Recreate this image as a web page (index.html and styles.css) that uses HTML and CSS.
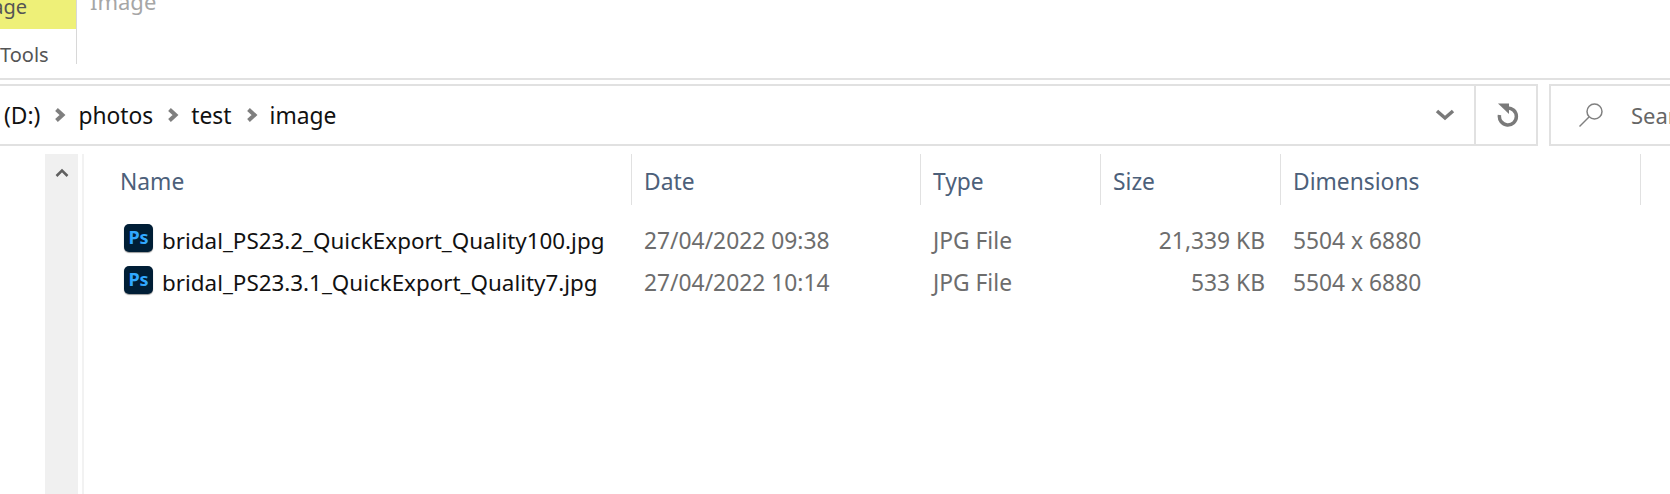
FILE: index.html
```html
<!DOCTYPE html>
<html lang="en">
<head>
  <meta charset="UTF-8">
  <title>image</title>
  <link rel="stylesheet" href="styles.css">
</head>
<body>

  <!-- Ribbon, only the bottom of it is visible -->
  <div class="ribbon">
    <div class="ribbon-tabs">
      <div class="tab-active">age</div>
      <div class="tab-tools">Tools</div>
    </div>
    <div class="ribbon-group">Image</div>
  </div>

  <!-- Address bar -->
  <div class="nav">
    <div class="address">
      <div class="crumbs">
        <span>(D:)</span>
        <svg class="crumb-sep" viewBox="0 0 12 14"><path d="M2.500 1.500l6 5.500-6 5.500" /></svg>
        <span>photos</span>
        <svg class="crumb-sep" viewBox="0 0 12 14"><path d="M2.500 1.500l6 5.500-6 5.500" /></svg>
        <span>test</span>
        <svg class="crumb-sep" viewBox="0 0 12 14"><path d="M2.500 1.500l6 5.500-6 5.500" /></svg>
        <span>image</span>
      </div>
      <div class="address-drop">
        <svg viewBox="0 0 20 12"><path d="M2 2l8 7 8-7" /></svg>
      </div>
      <div class="address-refresh">
        <svg viewBox="0 0 24 24">
          <path class="refresh-arc" d="M11 5a8.500 8.500 0 1 1-7.500 7" />
          <path class="refresh-head" d="M2 0.500h11v10.500z" />
        </svg>
      </div>
    </div>
    <div class="search">
      <svg viewBox="0 0 26 26"><circle cx="16.500" cy="9.500" r="7.500" /><path d="M11 15L1.500 24.500" /></svg>
      <span>Search</span>
    </div>
  </div>

  <div class="content">
    <div class="scroll">
      <svg viewBox="0 0 14 10"><path d="M1.500 8L7 2.500 12.500 8" /></svg>
    </div>

    <div class="files">
      <div class="head">
        <div class="col-name">Name</div>
        <div class="col-date">Date</div>
        <div class="col-type">Type</div>
        <div class="col-size">Size</div>
        <div class="col-dim">Dimensions</div>
      </div>

      <div class="row">
        <div class="col-name"><span class="ps">Ps</span><span class="fname">bridal_PS23.2_QuickExport_Quality100.jpg</span></div>
        <div class="col-date">27/04/2022 09:38</div>
        <div class="col-type">JPG File</div>
        <div class="col-size num">21,339 KB</div>
        <div class="col-dim">5504 x 6880</div>
      </div>
      <div class="row">
        <div class="col-name"><span class="ps">Ps</span><span class="fname">bridal_PS23.3.1_QuickExport_Quality7.jpg</span></div>
        <div class="col-date">27/04/2022 10:14</div>
        <div class="col-type">JPG File</div>
        <div class="col-size num">533 KB</div>
        <div class="col-dim">5504 x 6880</div>
      </div>
    </div>
  </div>

</body>
</html>
```

FILE: styles.css
```css
/* General */
html, body {
  height: 494px;
  overflow: hidden;
}

body {
  margin: 0;
  background-color: #fff;
  font-family: "Noto Sans", "Open Sans", sans-serif;
  font-size: 22.800px;
  color: #111;
}

/* Ribbon */
.ribbon {
  display: flex;
  height: 78px;
  border-bottom: 2px solid #e1e1e1;
  font-size: 22px;
}

.ribbon-tabs {
  width: 76px;
  height: 64px;
  border-right: 1px solid #d8d8d8;
  text-align: right;
  overflow: hidden;
}

/* the tab label runs off the left edge of the window */
.tab-active {
  display: flex;
  justify-content: flex-end;
  height: 29px;
  line-height: 14px;
  padding-right: 49px;
  background-color: #eef078;
  color: #555;
  font-size: 20px;
}

.tab-tools {
  margin-top: 10px;
  line-height: 32px;
  padding-right: 29px;
  color: #555;
  font-size: 20px;
}

.ribbon-group {
  margin-left: 13px;
  height: 20px;
  line-height: 3px;
  color: #a6a6a6;
}

/* Address bar */
.nav {
  display: flex;
  gap: 11px;
  margin-top: 4px;
  height: 62px;
}

.address {
  width: 1538px;
  display: flex;
  align-items: stretch;
  box-sizing: border-box;
  border: 2px solid #e1e1e1;
  border-left: none;
}

.crumbs {
  flex: 1;
  display: flex;
  align-items: center;
  padding-left: 4px;
  color: #111;
}

.crumb-sep {
  width: 12px;
  height: 14px;
  margin: 0 12px 0 14px;
}

.crumb-sep path {
  fill: none;
  stroke: #7f7f7f;
  stroke-width: 4;
}

.address-drop {
  width: 62px;
  padding-left: 4px;
  box-sizing: border-box;
  display: flex;
  align-items: center;
  justify-content: center;
}

.address-drop svg {
  width: 20px;
  height: 12px;
}

.address-drop path {
  fill: none;
  stroke: #7a7a7a;
  stroke-width: 3.500;
}

.address-refresh {
  width: 62px;
  padding-left: 4px;
  box-sizing: border-box;
  border-left: 2px solid #e1e1e1;
  display: flex;
  align-items: center;
  justify-content: center;
}

.address-refresh svg {
  width: 24px;
  height: 24px;
}

.refresh-arc {
  fill: none;
  stroke: #7a7a7a;
  stroke-width: 3.500;
}

.refresh-head {
  fill: #7a7a7a;
}

.search {
  flex: 1;
  display: flex;
  align-items: center;
  box-sizing: border-box;
  border: 2px solid #e1e1e1;
  border-right: none;
  padding-left: 27px;
  color: #666;
  overflow: hidden;
  font-size: 22px;
}

.search svg {
  width: 26px;
  height: 26px;
  margin-right: 27px;
  flex-shrink: 0;
}

.search circle, .search path {
  fill: none;
  stroke: #808080;
  stroke-width: 1.500;
}

/* Content */
.content {
  display: flex;
  margin-top: 8px;
  height: 341px;
}

.scroll {
  width: 33px;
  margin-left: 45px;
  background-color: #f0f0f0;
  text-align: center;
  border-right: 4px solid #fff;
}

.scroll svg {
  width: 14px;
  height: 10px;
  margin-top: 7px;
}

.scroll path {
  fill: none;
  stroke: #606060;
  stroke-width: 2.500;
}

.files {
  flex: 1;
  border-left: 2px solid #f2f2f2;
}

.head, .row {
  display: flex;
}

.head {
  height: 51px;
  color: #4c607a;
  margin-bottom: 14px;
}

.head > div {
  border-right: 1px solid #e1e1e1;
  line-height: 55px;
}

.row {
  height: 42px;
  align-items: center;
  color: #6d6d6d;
}

.col-name { width: 548px; padding-left: 36px; box-sizing: border-box; }
.col-date { width: 289px; padding-left: 12px; box-sizing: border-box; }
.col-type { width: 180px; padding-left: 12px; box-sizing: border-box; }
.col-size { width: 180px; padding-left: 12px; box-sizing: border-box; }
.col-dim { width: 360px; padding-left: 12px; box-sizing: border-box; }

.row .num {
  text-align: right;
  padding-right: 16px;
  padding-left: 0;
}

.row .col-name {
  display: flex;
  align-items: center;
  padding-left: 40px;
}

.ps {
  width: 29px;
  height: 28px;
  margin-right: 9px;
  margin-top: -4px;
  border-radius: 5px;
  background-color: #001e36;
  box-shadow: 0 1px 1px #999;
  color: #31a8ff;
  font-size: 18px;
  font-weight: bold;
  line-height: 27px;
  text-align: center;
}

.fname {
  color: #111;
  font-size: 22.400px;
}
```
